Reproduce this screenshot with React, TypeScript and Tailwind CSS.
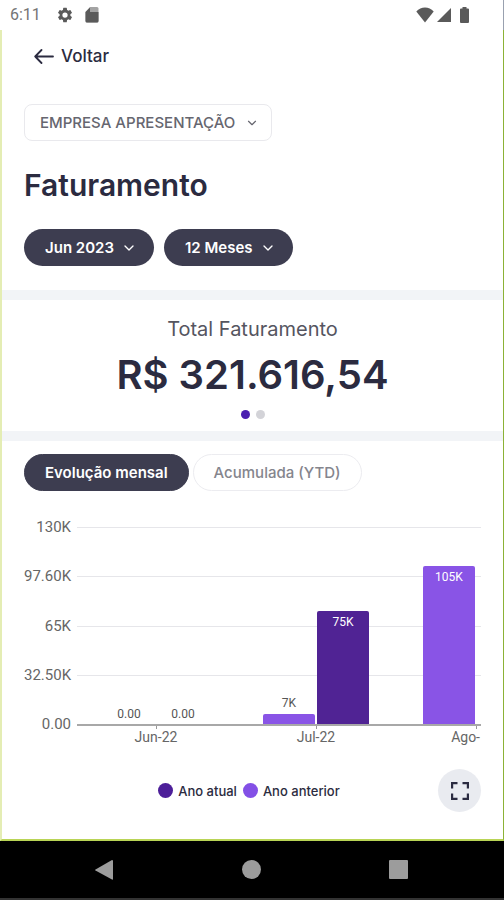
import { useState } from 'react'
import { ChevronDown } from 'lucide-react'
import clsx from 'clsx'

const yTicks = ['130K', '97.60K', '65K', '32.50K', '0.00']

const months = [
  { name: 'Jun-22', previous: { value: 0, label: '0.00' }, current: { value: 0, label: '0.00' } },
  { name: 'Jul-22', previous: { value: 7, label: '7K' }, current: { value: 75, label: '75K' } },
  { name: 'Ago-', previous: { value: 105, label: '105K' }, current: null },
]

const MAX = 130
const TOP = 11
const BASE = 208
const STEP = 160
const BAR = 52

const StatusBar = () => (
  <header className="flex h-[30px] items-center justify-between border-r border-gray-400 pl-[10px] pr-[34px] text-[#5a5a5a]">
    <div className="flex items-center">
      <span className="font-[Roboto,sans-serif] text-base text-[#757575]">6:11</span>
      <svg className="ml-[15px] size-[18px]" viewBox="0 0 24 24" fill="currentColor">
        <path d="M19.14 12.94c.04-.3.06-.61.06-.94 0-.32-.02-.64-.07-.94l2.03-1.58a.49.49 0 0 0 .12-.61l-1.92-3.32a.49.49 0 0 0-.59-.22l-2.39.96c-.5-.38-1.03-.7-1.62-.94l-.36-2.54a.48.48 0 0 0-.48-.41h-3.84a.48.48 0 0 0-.47.41l-.36 2.54c-.59.24-1.13.57-1.62.94l-2.39-.96a.48.48 0 0 0-.59.22L2.74 8.87a.48.48 0 0 0 .12.61l2.03 1.58c-.05.3-.09.63-.09.94s.02.64.07.94l-2.03 1.58a.49.49 0 0 0-.12.61l1.92 3.32c.12.22.37.29.59.22l2.39-.96c.5.38 1.03.7 1.62.94l.36 2.54c.05.24.24.41.48.41h3.84c.24 0 .44-.17.47-.41l.36-2.54c.59-.24 1.13-.56 1.62-.94l2.39.96c.22.08.47 0 .59-.22l1.92-3.32a.48.48 0 0 0-.12-.61zM12 15.500a3.500 3.500 0 1 1 0-7 3.500 3.500 0 0 1 0 7z" />
      </svg>
      <svg className="ml-[9px] size-[18px]" viewBox="0 0 18 18">
        <path d="M7 1h7q1.500 0 1.500 1.500V15q0 1.500-1.500 1.500H4q-1.500 0-1.500-1.500V6z" fill="#a3a3a3" />
        <path d="M2.500 6H15.500V15q0 1.500-1.500 1.500H4q-1.500 0-1.500-1.500z" fill="currentColor" />
        <path d="M2.500 6 7 1.500V6z" fill="currentColor" />
      </svg>
    </div>
    <div className="flex items-center">
      <svg className="h-4 w-[18px]" viewBox="0 0 18 16" fill="currentColor">
        <path d="M9 15.500.3 4.500Q4 .5 9 .5t8.700 4z" />
      </svg>
      <svg className="ml-[3px] h-4 w-[14px]" viewBox="0 0 14 16" fill="currentColor">
        <path d="M14 1v14H0z" />
      </svg>
      <svg className="ml-[9px] h-4 w-[9px]" viewBox="0 0 9 16" fill="currentColor">
        <path d="M2.500 0h4v1.500H8q1 0 1 1V15q0 1-1 1H1q-1 0-1-1V2.500q0-1 1-1h1.500z" />
      </svg>
    </div>
  </header>
)

const PillSelect = ({ label, value }: { label: string; value: string }) => (
  <div className="relative">
    <select
      aria-label={label}
      className="h-[37px] appearance-none rounded-full bg-[#3d3d50] pl-[21px] pr-10 pt-px text-[15px] font-semibold text-white"
    >
      <option>{value}</option>
    </select>
    <ChevronDown className="pointer-events-none absolute right-[17px] top-[11px] size-4 text-white" />
  </div>
)

const Chart = () => (
  <div className="mt-[26px] flex px-[22px] font-[Roboto,sans-serif]">
    <div className="flex h-[217px] w-[47px] shrink-0 flex-col justify-between text-right text-[15px] leading-5 text-[#666]">
      {yTicks.map((tick) => (
        <span key={tick}>{tick}</span>
      ))}
    </div>
    <div className="ml-[6px] min-w-0 flex-1 overflow-x-auto [scrollbar-width:none]">
      <svg className="block h-[236px] w-[480px]" viewBox="0 0 480 236">
        {yTicks.slice(0, -1).map((tick, i) => (
          <rect key={tick} x="0" y={Math.round(TOP + (i * (BASE - TOP)) / 4) - 1} width="480" height="1" fill="#e6e6ea" />
        ))}
        {months.map((month, i) => {
          const center = STEP * i + 79
          const last = i === months.length - 1
          const bars = [
            { ...month.previous, x: center - BAR - 1, fill: '#8954e6' },
            ...(month.current ? [{ ...month.current, x: center + 1, fill: '#502394' }] : []),
          ]
          return (
            <g key={month.name}>
              {bars.map((bar) => {
                const height = Math.round((bar.value / MAX) * (BASE - TOP))
                const inside = height > 30
                return (
                  <g key={bar.x}>
                    {height > 0 && (
                      <path
                        d={`M${bar.x} ${BASE}v${2 - height}q0-2 2-2h${BAR - 4}q2 0 2 2v${height - 2}z`}
                        fill={bar.fill}
                      />
                    )}
                    <text
                      x={bar.x + BAR / 2}
                      y={BASE - height + (inside ? 15 : -7)}
                      textAnchor="middle"
                      fontSize="12"
                      fill={inside ? '#fff' : '#555'}
                    >
                      {bar.label}
                    </text>
                  </g>
                )
              })}
              <rect x={center} y={BASE} width="1" height="4" fill="#999" />
              <text x={last ? center + 4 : center} y="225" textAnchor={last ? 'end' : 'middle'} fontSize="14" fill="#666">
                {month.name}
              </text>
            </g>
          )
        })}
        <rect x="0" y={BASE - 1} width="480" height="2" fill="#a8a8a8" />
      </svg>
    </div>
  </div>
)

const App = () => {
  const [tab, setTab] = useState('mensal')

  const tabClass = (active: boolean) =>
    clsx(
      'h-[37px] rounded-full border px-5 pt-px text-[15px]',
      active ? 'border-[#3d3d50] bg-[#3d3d50] font-semibold text-white' : 'border-[#ececf0] bg-white font-medium text-[#85858d]'
    )

  return (
    <div className="flex min-h-screen flex-col bg-white font-[Inter,sans-serif] text-[#2b2b40]">
      <StatusBar />

      <main className="flex-1 border-b-2 border-l-2 border-r border-b-[#b9d456] border-l-[#e4edb4] border-r-[#8cb236]">
        <section className="px-[22px] pb-6">
          <a href="#" className="ml-2.5 flex h-[54px] items-center gap-[7px] text-[17px] font-medium">
            <svg className="h-4 w-5" viewBox="0 0 20 16" fill="none" stroke="currentColor" strokeWidth="1.800" strokeLinecap="round" strokeLinejoin="round">
              <path d="M19 7.500H1.200M7.500 1 1.200 7.500 7.500 14" />
            </svg>
            Voltar
          </a>
          <div className="relative mt-5 w-fit">
            <select
              aria-label="Empresa"
              className="h-[37px] appearance-none rounded-lg border border-[#e9e9ed] bg-white pl-[15px] pr-[35px] pt-0.5 text-[15px] font-medium text-[#66666f]"
            >
              <option>EMPRESA APRESENTAÇÃO</option>
            </select>
            <ChevronDown className="pointer-events-none absolute right-[13px] top-3 size-[14px] text-[#66666f]" />
          </div>
          <h1 className="mt-6 text-[30px] font-semibold leading-10">Faturamento</h1>
          <div className="mt-6 flex gap-2.5">
            <PillSelect label="Mês" value="Jun 2023" />
            <PillSelect label="Período" value="12 Meses" />
          </div>
        </section>

        <section className="border-y-[10px] border-[#f2f4f7] pb-3 pt-[17px] text-center">
          <h2 className="text-xl leading-6 text-[#55555f]">Total Faturamento</h2>
          <p className="mt-2 text-[40px] font-semibold leading-[52px]">R$ 321.616,54</p>
          <div className="mt-[9px] flex justify-center gap-1.5">
            <span className="size-[9px] rounded-full bg-[#4b1fb0]" />
            <span className="size-[9px] rounded-full bg-[#d3d3d8]" />
          </div>
        </section>

        <section>
          <div className="flex gap-1 px-[22px] pt-[13px]">
            <button type="button" className={tabClass(tab === 'mensal')} onClick={() => setTab('mensal')}>
              Evolução mensal
            </button>
            <button type="button" className={tabClass(tab === 'ytd')} onClick={() => setTab('ytd')}>
              Acumulada (YTD)
            </button>
          </div>

          <Chart />

          <div className="mb-6 mt-4 flex items-center px-[22px]">
            <ul className="flex flex-1 justify-center gap-1.5 pl-9 text-[13px] leading-4 font-medium">
              <li className="flex items-center gap-[5px]">
                <span className="size-[15px] rounded-full bg-[#4d1f99]" />
                Ano atual
              </li>
              <li className="flex items-center gap-[5px]">
                <span className="size-[15px] rounded-full bg-[#8350e6]" />
                Ano anterior
              </li>
            </ul>
            <button
              type="button"
              aria-label="Tela cheia"
              className="flex size-[43px] items-center justify-center rounded-full bg-[#e9ebf0]"
            >
              <svg className="size-[18px]" viewBox="0 0 18 18" fill="none" stroke="currentColor" strokeWidth="2.200">
                <path d="M1.100 6.500V1.100H6.500M11.500 1.100h5.400V6.500M16.900 11.500v5.400H11.500M6.500 16.900H1.100V11.500" />
              </svg>
            </button>
          </div>
        </section>
      </main>

      <nav className="flex h-[59px] items-center justify-around border-b-2 border-[#333] bg-black pl-[30px] pr-8 text-[#9c9c9c]">
        <button type="button" aria-label="Voltar">
          <svg className="size-5" viewBox="0 0 20 20" fill="currentColor">
            <path d="M18 0q1 0 1 1v18q0 1-1 .6L1.500 10.600q-1-.6 0-1.200z" />
          </svg>
        </button>
        <button type="button" aria-label="Início" className="size-[19px] rounded-full bg-current" />
        <button type="button" aria-label="Recentes" className="size-[19px] rounded-[1px] bg-current" />
      </nav>
    </div>
  )
}

export default App
